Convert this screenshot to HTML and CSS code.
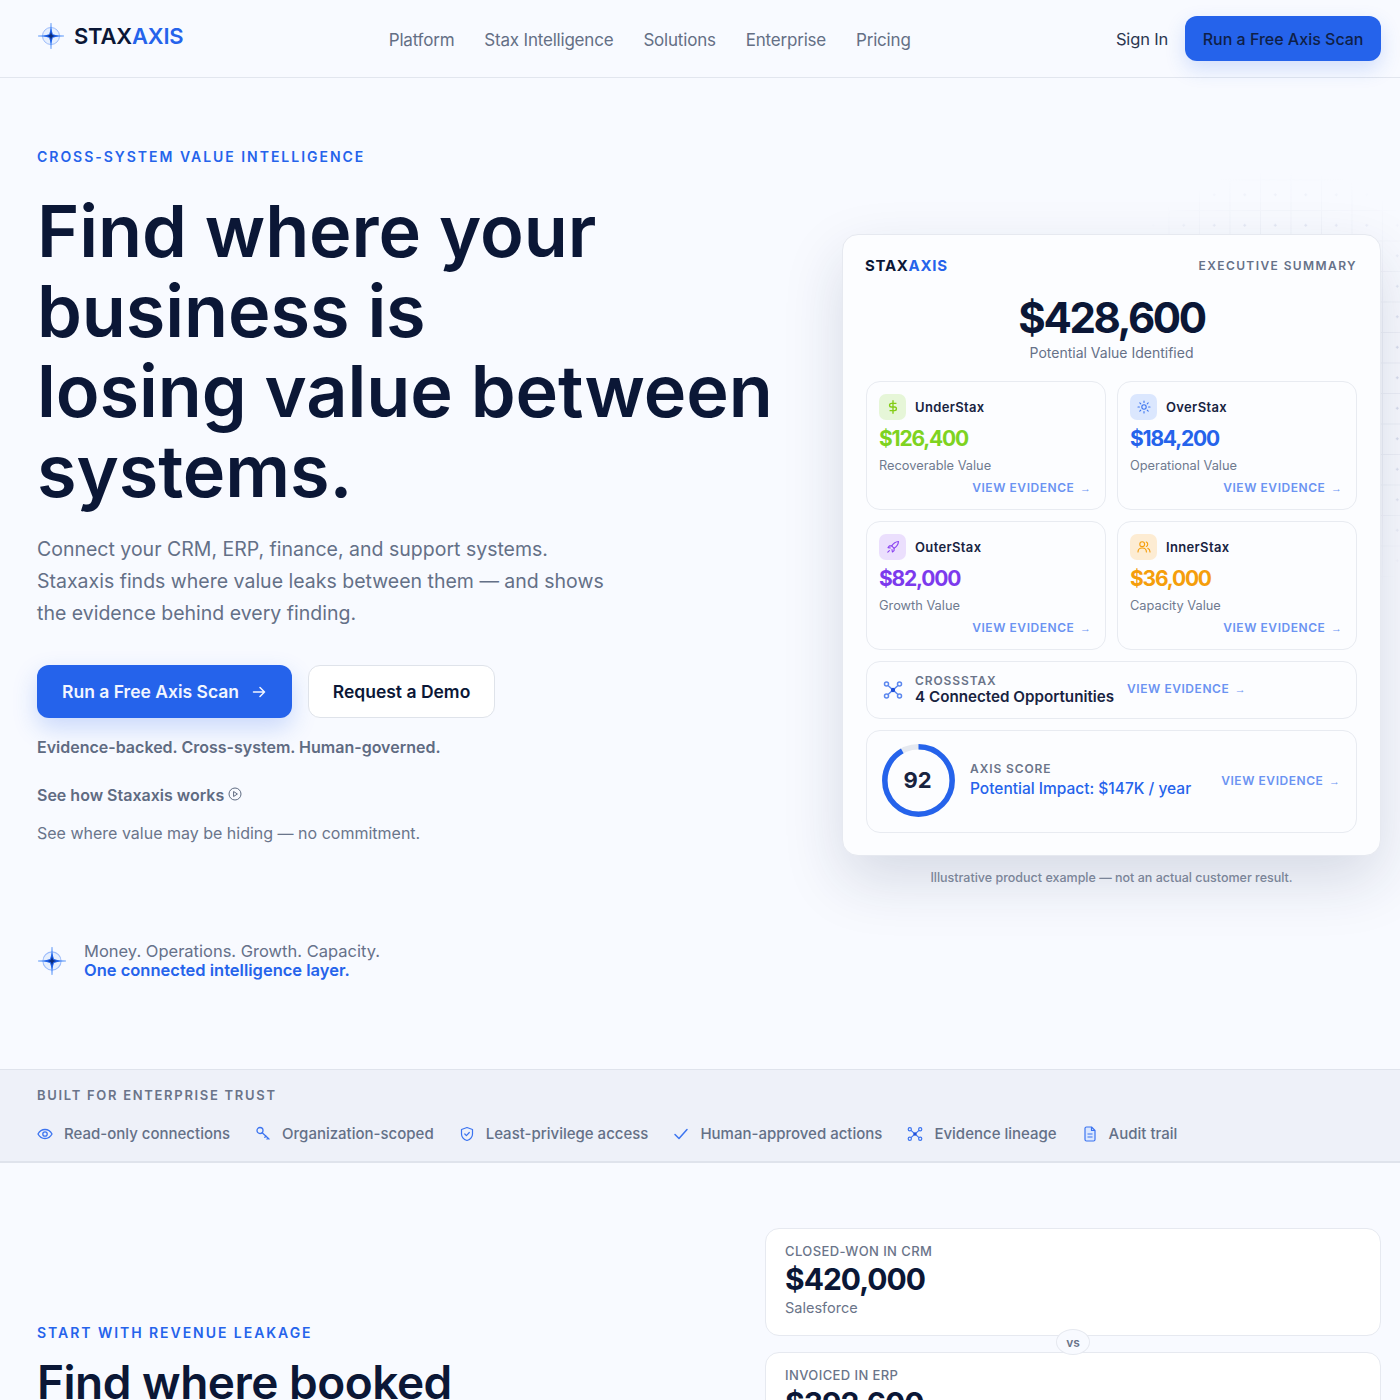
FILE: index.html
```html
<!DOCTYPE html>
<html lang="en">
<head>
  <meta charset="UTF-8">
  <meta name="viewport" content="width=device-width, initial-scale=1.0">
  <title>Staxaxis</title>
  <link rel="stylesheet" href="styles.css">
</head>
<body>
  <svg class="svg-defs" width="0" height="0" aria-hidden="true">
    <defs>
      <symbol id="compass" viewBox="0 0 28 28">
        <circle cx="14" cy="14" r="8.500" fill="#dbe7fe" fill-opacity="0.6" stroke="#9dbcfb" stroke-width="1"/>
        <path d="M14 1 14.700 13.300 27 14 14.700 14.700 14 27 13.300 14.700 1 14 13.300 13.300Z" fill="#3b82f6" stroke="#3b82f6" stroke-width="0.4"/>
        <path d="M14 6 15.800 12.200 22 14 15.800 15.800 14 22 12.200 15.800 6 14 12.200 12.200Z" fill="#1d5fe8"/>
        <path d="M14 10 15 13 18 14 15 15 14 18 13 15 10 14 13 13Z" fill="#0b2a7a"/>
      </symbol>
      <symbol id="network" viewBox="0 0 20 20">
        <g fill="none" stroke="currentColor" stroke-width="1.500">
          <circle cx="3.500" cy="4" r="2"/><circle cx="16.500" cy="4" r="2"/>
          <circle cx="3.500" cy="16" r="2"/><circle cx="16.500" cy="16" r="2"/>
          <path d="M5 5.500 15 14.500M15 5.500 5 14.500"/>
        </g>
        <circle cx="10" cy="10" r="2.200" fill="#1d4ed8"/>
      </symbol>
    </defs>
  </svg>

  <header class="site-header">
    <a class="logo" href="#">
      <svg class="logo-mark" width="28" height="28"><use href="#compass"/></svg>
      <span class="logo-text">STAX<span class="blue">AXIS</span></span>
    </a>
    <nav class="main-nav">
      <a href="#">Platform</a>
      <a href="#">Stax Intelligence</a>
      <a href="#">Solutions</a>
      <a href="#">Enterprise</a>
      <a href="#">Pricing</a>
    </nav>
    <div class="header-actions">
      <a class="sign-in" href="#">Sign In</a>
      <a class="header-cta" href="#">Run a Free Axis Scan</a>
    </div>
  </header>

  <section class="hero">
    <div class="hero-copy">
      <p class="eyebrow">CROSS-SYSTEM VALUE INTELLIGENCE</p>
      <h1>Find where your business is<br>losing value between systems.</h1>
      <p class="lead">Connect your CRM, ERP, finance, and support systems.<br>Staxaxis finds where value leaks between them — and shows<br>the evidence behind every finding.</p>
      <div class="hero-buttons">
        <a class="btn btn-primary" href="#">Run a Free Axis Scan
          <svg width="16" height="16" viewBox="0 0 16 16" fill="none" stroke="currentColor" stroke-width="1.500" stroke-linecap="round" stroke-linejoin="round"><path d="M2.500 8h11M9 3.500 13.500 8 9 12.500"/></svg>
        </a>
        <a class="btn btn-secondary" href="#">Request a Demo</a>
      </div>
      <p class="backed">Evidence-backed. Cross-system. Human-governed.</p>
      <a class="how-link" href="#">See how Staxaxis works
        <svg width="14" height="14" viewBox="0 0 14 14" fill="none" stroke="currentColor" stroke-width="1"><circle cx="7" cy="7" r="6"/><path d="M5.600 4.500 9.400 7 5.600 9.500Z"/></svg>
      </a>
      <p class="no-commit">See where value may be hiding — no commitment.</p>
      <div class="layer-note">
        <svg width="30" height="30"><use href="#compass"/></svg>
        <p>Money. Operations. Growth. Capacity.<br><strong>One connected intelligence layer.</strong></p>
      </div>
    </div>

    <div class="hero-visual">
      <div class="grid-bg"></div>
      <div class="summary-card">
        <div class="summary-head">
          <span class="summary-logo">STAX<span class="blue">AXIS</span></span>
          <span class="summary-tag">EXECUTIVE SUMMARY</span>
        </div>
        <div class="summary-total">$428,600</div>
        <div class="summary-sub">Potential Value Identified</div>

        <div class="stax-grid">
          <div class="stax-card">
            <div class="stax-title">
              <span class="stax-icon icon-green"><svg width="16" height="16" viewBox="0 0 14 14" fill="none" stroke="currentColor" stroke-width="1.200"><path d="M7 1v12M10 3.800H5.600a1.600 1.600 0 0 0 0 3.200h2.800a1.600 1.600 0 0 1 0 3.200H4"/></svg></span>
              UnderStax
            </div>
            <div class="stax-value text-green">$126,400</div>
            <div class="stax-label">Recoverable Value</div>
            <a class="evidence stax-evidence" href="#">VIEW EVIDENCE <span class="evidence-arrow">→</span></a>
          </div>
          <div class="stax-card">
            <div class="stax-title">
              <span class="stax-icon icon-blue"><svg width="14" height="14" viewBox="0 0 14 14" fill="none" stroke="currentColor" stroke-width="1.100" stroke-linecap="round"><circle cx="7" cy="7" r="2.200"/><path d="M7 1v1.400M7 11.600V13M1 7h1.400M11.600 7H13M2.800 2.800l1 1M10.200 10.200l1 1M2.800 11.200l1-1M10.200 3.800l1-1"/></svg></span>
              OverStax
            </div>
            <div class="stax-value text-blue">$184,200</div>
            <div class="stax-label">Operational Value</div>
            <a class="evidence stax-evidence" href="#">VIEW EVIDENCE <span class="evidence-arrow">→</span></a>
          </div>
          <div class="stax-card">
            <div class="stax-title">
              <span class="stax-icon icon-purple"><svg width="14" height="14" viewBox="0 0 14 14" fill="none" stroke="currentColor" stroke-width="1.100" stroke-linecap="round" stroke-linejoin="round"><path d="M12.500 1.500c-3 .2-5 1.600-6.800 4.400l2.400 2.400c2.800-1.800 4.200-3.800 4.400-6.800Z"/><path d="M5.700 5.900H3.400L2 7.600l2.400.4M8.100 8.300v2.300L6.400 12 6 9.600M3.400 10.600 1.800 12.200"/></svg></span>
              OuterStax
            </div>
            <div class="stax-value text-purple">$82,000</div>
            <div class="stax-label">Growth Value</div>
            <a class="evidence stax-evidence" href="#">VIEW EVIDENCE <span class="evidence-arrow">→</span></a>
          </div>
          <div class="stax-card">
            <div class="stax-title">
              <span class="stax-icon icon-orange"><svg width="14" height="14" viewBox="0 0 14 14" fill="none" stroke="currentColor" stroke-width="1.100" stroke-linecap="round"><circle cx="5.200" cy="4.200" r="2.400"/><path d="M1 12c0-2.600 1.800-4 4.200-4s4.200 1.400 4.200 4M9.300 2a2.400 2.400 0 0 1 0 4.400M10.800 8.300c1.400.6 2.200 1.900 2.200 3.700"/></svg></span>
              InnerStax
            </div>
            <div class="stax-value text-orange">$36,000</div>
            <div class="stax-label">Capacity Value</div>
            <a class="evidence stax-evidence" href="#">VIEW EVIDENCE <span class="evidence-arrow">→</span></a>
          </div>
        </div>

        <div class="cross-row">
          <svg class="cross-icon" width="20" height="20"><use href="#network"/></svg>
          <div class="cross-text">
            <div class="mini-label">CROSSSTAX</div>
            <div class="cross-title">4 Connected Opportunities</div>
          </div>
          <a class="evidence cross-evidence" href="#">VIEW EVIDENCE <span class="evidence-arrow">→</span></a>
        </div>

        <div class="score-row">
          <div class="score-ring">
            <svg width="73" height="73" viewBox="0 0 73 73" fill="none" stroke-width="5.500">
              <circle cx="36.500" cy="36.500" r="33.700" stroke="#e5e9f0"/>
              <circle class="score-arc" cx="36.500" cy="36.500" r="33.700" stroke="#2563eb" pathLength="100" stroke-dasharray="92 100"/>
            </svg>
            <span class="score-num">92</span>
          </div>
          <div class="score-text">
            <div class="mini-label">AXIS SCORE</div>
            <div class="score-impact">Potential Impact: $147K / year</div>
          </div>
          <a class="evidence" href="#">VIEW EVIDENCE <span class="evidence-arrow">→</span></a>
        </div>
      </div>
      <p class="card-caption">Illustrative product example — not an actual customer result.</p>
    </div>
  </section>

  <section class="trust-band">
    <p class="trust-title">BUILT FOR ENTERPRISE TRUST</p>
    <ul class="trust-list">
      <li><svg width="16" height="16" viewBox="0 0 16 16" fill="none" stroke="currentColor" stroke-width="1.300"><path d="M1 8c1.600-3 4-4.500 7-4.500s5.400 1.500 7 4.500c-1.600 3-4 4.500-7 4.500S2.600 11 1 8Z"/><circle cx="8" cy="8" r="2.200"/></svg>Read-only connections</li>
      <li><svg width="16" height="16" viewBox="0 0 16 16" fill="none" stroke="currentColor" stroke-width="1.300" stroke-linecap="round"><circle cx="5" cy="4.500" r="3"/><path d="M7.200 6.700 14 13M11 10l-1.200 1.200M13 12l-1 1"/></svg>Organization-scoped</li>
      <li><svg width="16" height="16" viewBox="0 0 16 16" fill="none" stroke="currentColor" stroke-width="1.200" stroke-linecap="round" stroke-linejoin="round"><path d="M8 1.500 13.500 3.500V8c0 3.200-2.200 5.400-5.500 6.500C4.700 13.400 2.500 11.200 2.500 8V3.500Z"/><path d="M5.800 8 7.400 9.600 10.300 6.500"/></svg>Least-privilege access</li>
      <li><svg width="16" height="16" viewBox="0 0 16 16" fill="none" stroke="currentColor" stroke-width="1.500" stroke-linecap="round" stroke-linejoin="round"><path d="M2 8.500 6 12.500 14 3.500"/></svg>Human-approved actions</li>
      <li><svg width="16" height="16"><use href="#network"/></svg>Evidence lineage</li>
      <li><svg width="16" height="16" viewBox="0 0 16 16" fill="#dbe7fe" stroke="currentColor" stroke-width="1.200" stroke-linejoin="round"><path d="M3 2.500A1.500 1.500 0 0 1 4.500 1H9.500L13 4.500V13.500A1.500 1.500 0 0 1 11.500 15H4.500A1.500 1.500 0 0 1 3 13.500Z"/><path d="M9.500 1V4.500H13M5.500 8H10.500M5.500 11H10.500" fill="none"/></svg>Audit trail</li>
    </ul>
  </section>

  <section class="leakage">
    <div class="leakage-copy">
      <p class="eyebrow">START WITH REVENUE LEAKAGE</p>
      <h2>Find where booked</h2>
    </div>
    <div class="compare">
      <div class="compare-card">
        <div class="compare-label">CLOSED-WON IN CRM</div>
        <div class="compare-value">$420,000</div>
        <div class="compare-source">Salesforce</div>
      </div>
      <span class="vs">vs</span>
      <div class="compare-card">
        <div class="compare-label">INVOICED IN ERP</div>
        <div class="compare-value">$392,600</div>
      </div>
    </div>
  </section>
</body>
</html>
```

FILE: styles.css
```css
* {
  box-sizing: border-box;
}
html, body {
  height: 1400px;
  overflow: hidden;
}
body {
  margin: 0;
  background-color: #f8faff;
  color: #0b1736;
  font-family: Inter, "Liberation Sans", sans-serif;
}
a {
  color: inherit;
  text-decoration: none;
}
p {
  margin: 0;
}
.svg-defs {
  position: absolute;
}
.blue {
  color: #2563eb;
}

/* header */
.site-header {
  height: 78px;
  padding: 0 19px 0 37px;
  display: flex;
  justify-content: space-between;
  align-items: center;
  border-bottom: 1px solid #e2e6ee;
}
.logo {
  display: flex;
  align-items: center;
  gap: 9px;
  margin-top: -6px;
}
.logo-text {
  font-size: 22px;
  font-weight: 600;
  letter-spacing: -0.2px;
}
.main-nav {
  display: flex;
  gap: 30px;
  padding-top: 2px;
  font-size: 17px;
  color: #646f85;
  letter-spacing: -0.2px;
}
.header-actions {
  display: flex;
  justify-content: flex-end;
  align-items: center;
  gap: 17px;
}
.sign-in {
  font-size: 16.500px;
  letter-spacing: -0.15px;
  color: #2b3650;
}
.header-cta {
  height: 45px;
  padding: 0 17.500px;
  display: flex;
  align-items: center;
  background-color: #2563eb;
  border-radius: 12px;
  color: #0f1f47;
  font-size: 16px;
  font-weight: 500;
  box-shadow: 0 8px 20px rgba(37,99,235,0.18);
}

/* hero */
.hero {
  height: 991px;
  padding: 0 19px 0 37px;
  display: flex;
  justify-content: space-between;
}
.hero-copy {
  padding-top: 70px;
  width: 760px;
}
.eyebrow {
  font-size: 14px;
  font-weight: 600;
  line-height: 17px;
  letter-spacing: 1.970px;
  color: #2563eb;
}
h1 {
  margin: 26px 0 0;
  font-size: 72px;
  font-weight: 600;
  line-height: 80px;
  letter-spacing: -0.1px;
  color: #0b1736;
}
.lead {
  margin-top: 22px;
  font-size: 19.500px;
  line-height: 32px;
  color: #647087;
}
.hero-buttons {
  margin-top: 36px;
  display: flex;
  gap: 16px;
}
.btn {
  height: 53px;
  display: flex;
  align-items: center;
  border-radius: 12px;
  font-size: 17.500px;
  font-weight: 600;
}
.btn-primary {
  width: 255px;
  padding-left: 25px;
  gap: 12px;
  background-color: #2563eb;
  color: #f2f6ff;
  box-shadow: 0 10px 24px rgba(37,99,235,0.22);
}
.btn-secondary {
  width: 187px;
  justify-content: center;
  background-color: #fff;
  border: 1px solid #dfe3ea;
}
.backed {
  margin-top: 19px;
  font-size: 16px;
  line-height: 20px;
  font-weight: 600;
  color: #5f6b82;
}
.how-link {
  margin-top: 28px;
  display: flex;
  align-items: center;
  gap: 4px;
  font-size: 16px;
  line-height: 20px;
  font-weight: 600;
  color: #5f6b82;
}
.how-link svg {
  margin-top: -3px;
}
.no-commit {
  margin-top: 18px;
  font-size: 16px;
  line-height: 20px;
  color: #6a758b;
}
.layer-note {
  margin-top: 99px;
  display: flex;
  align-items: center;
  gap: 17px;
}
.layer-note p {
  font-size: 16.500px;
  line-height: 19px;
  color: #66718a;
}
.layer-note strong {
  font-weight: 600;
  color: #2563eb;
}

/* summary card */
.hero-visual {
  position: relative;
  width: 539px;
  padding-top: 156px;
}
.grid-bg {
  position: absolute;
  top: 95px;
  left: 240px;
  right: -19px;
  height: 440px;
  background-image:
    radial-gradient(circle, #d5dcec 1px, transparent 1.400px),
    linear-gradient(#eceff7 1px, transparent 1px),
    linear-gradient(90deg, #eceff7 1px, transparent 1px);
  background-size: 30.500px 30.500px;
  background-position: 25.500px 6.500px;
  -webkit-mask-image: radial-gradient(ellipse 203px 224px at 200px 220px, #000 60%, transparent 100%);
  mask-image: radial-gradient(ellipse 203px 224px at 200px 220px, #000 60%, transparent 100%);
}
.summary-card {
  position: relative;
  height: 622px;
  padding: 22px 23px 0;
  background-color: #fcfdff;
  border: 1px solid #e6e9f0;
  border-radius: 16px;
  box-shadow: 0 24px 60px rgba(25,40,80,0.15);
}
.summary-head {
  display: flex;
  justify-content: space-between;
  align-items: center;
  height: 17px;
}
.summary-logo {
  margin-left: -1px;
  font-size: 15px;
  font-weight: 700;
  letter-spacing: 0.7px;
  color: #0b1736;
}
.summary-tag {
  font-size: 12px;
  font-weight: 600;
  letter-spacing: 1.400px;
  color: #667188;
}
.summary-total {
  margin-top: 19px;
  text-align: center;
  font-size: 42px;
  font-weight: 700;
  line-height: 50px;
  letter-spacing: -2.400px;
}
.summary-sub {
  text-align: center;
  font-size: 14px;
  line-height: 20px;
  color: #667188;
}
.stax-grid {
  margin-top: 18px;
  display: grid;
  grid-template-columns: 240px 240px;
  grid-auto-rows: 129px;
  gap: 11px;
}
.stax-card {
  padding: 12px 12px 0;
  display: flex;
  flex-direction: column;
  border: 1px solid #e8ebf1;
  border-radius: 14px;
}
.stax-title {
  display: flex;
  align-items: center;
  gap: 9px;
  font-size: 13px;
  font-weight: 600;
  letter-spacing: 0.35px;
  color: #18233f;
}
.stax-icon {
  width: 27px;
  height: 26px;
  display: flex;
  align-items: center;
  justify-content: center;
  border-radius: 7px;
}
.icon-green {
  background-color: #e6f6d8;
  color: #84cc16;
}
.icon-blue {
  background-color: #dbe7fe;
  color: #3b74f0;
}
.icon-purple {
  background-color: #ebdffd;
  color: #8b45f0;
}
.icon-orange {
  background-color: #fdecd3;
  color: #f59e0b;
}
.stax-value {
  margin-top: 5px;
  font-size: 21px;
  font-weight: 700;
  line-height: 27px;
  letter-spacing: -1.2px;
}
.text-green {
  color: #7ed321;
}
.text-blue {
  color: #2563eb;
}
.text-purple {
  color: #7c3aed;
}
.text-orange {
  color: #f59e0b;
}
.stax-label {
  margin-top: 5px;
  font-size: 12.800px;
  line-height: 17px;
  color: #6f7a8f;
}
.evidence {
  flex-shrink: 0;
  font-size: 12px;
  font-weight: 600;
  line-height: 16px;
  letter-spacing: 0.55px;
  color: #6b93f2;
}
.evidence-arrow {
  margin-left: 2px;
  font-family: "Liberation Sans", sans-serif;
  font-size: 11px;
  font-weight: 400;
  letter-spacing: 0;
}
.stax-evidence {
  margin-top: 6px;
  align-self: flex-end;
  margin-right: 2px;
}
.cross-row {
  margin-top: 11px;
  height: 58px;
  padding: 0 16px;
  display: flex;
  align-items: center;
  gap: 13px;
  border: 1px solid #e8ebf1;
  border-radius: 14px;
}
.cross-icon {
  color: #5b87ee;
}
.cross-text {
  margin-left: -1px;
}
.cross-evidence {
  margin-bottom: 2px;
}
.mini-label {
  font-size: 12px;
  font-weight: 600;
  line-height: 14px;
  letter-spacing: 0.9px;
  color: #6a7489;
}
.cross-title {
  font-size: 15.200px;
  font-weight: 600;
  line-height: 18px;
  color: #18233f;
}
.score-row {
  margin-top: 11px;
  height: 103px;
  padding: 0 16px 2px 15px;
  display: flex;
  align-items: center;
  border: 1px solid #e8ebf1;
  border-radius: 14px;
}
.score-ring {
  position: relative;
  width: 73px;
  height: 73px;
  display: flex;
  align-items: center;
  justify-content: center;
}
.score-ring svg {
  position: absolute;
  inset: 0;
}
.score-arc {
  transform: rotate(-90deg);
  transform-origin: center;
}
.score-num {
  position: relative;
  margin: -2px 2px 0 0;
  font-size: 22px;
  font-weight: 700;
  color: #18233f;
}
.score-text {
  flex: 1;
  margin-left: 15px;
}
.score-impact {
  margin-top: 3px;
  font-size: 15.500px;
  font-weight: 500;
  line-height: 20px;
  color: #2563eb;
}
.card-caption {
  position: relative;
  margin-top: 14px;
  text-align: center;
  font-size: 12.500px;
  font-weight: 500;
  line-height: 16px;
  color: #7a8498;
}

/* trust band */
.trust-band {
  height: 94px;
  padding: 17px 37px 0;
  background-color: #eef1f9;
  border-top: 1px solid #dfe3ec;
  border-bottom: 2px solid #dfe3ec;
}
.trust-title {
  font-size: 13px;
  font-weight: 600;
  line-height: 16px;
  letter-spacing: 1.700px;
  color: #6a7489;
}
.trust-list {
  margin: 22px 0 0;
  padding: 0;
  list-style: none;
  display: flex;
  gap: 25px;
}
.trust-list li {
  display: flex;
  align-items: center;
  gap: 11px;
  font-size: 15px;
  font-weight: 500;
  line-height: 18px;
  color: #647087;
}
.trust-list svg {
  color: #3b74f0;
}

/* revenue leakage */
.leakage {
  padding: 65px 19px 0 37px;
  display: flex;
  justify-content: space-between;
}
.leakage-copy {
  padding-top: 96px;
}
.leakage .eyebrow {
  letter-spacing: 1.950px;
}
h2 {
  margin: 13px 0 0;
  font-size: 46px;
  font-weight: 600;
  line-height: 56px;
  letter-spacing: -0.5px;
}
.compare {
  position: relative;
  width: 616px;
  display: flex;
  flex-direction: column;
  gap: 16px;
}
.compare-card {
  height: 108px;
  padding: 14px 19px 0;
  background-color: #fff;
  border: 1px solid #e6e9f0;
  border-radius: 14px;
}
.compare-label {
  font-size: 13px;
  font-weight: 500;
  line-height: 17px;
  letter-spacing: 0.4px;
  color: #6a7489;
}
.compare-value {
  font-size: 30px;
  font-weight: 700;
  line-height: 38px;
  letter-spacing: -1px;
}
.compare-source {
  margin-top: 1px;
  font-size: 14.500px;
  line-height: 18px;
  color: #6a7489;
}
.vs {
  position: absolute;
  top: 101px;
  left: 291px;
  width: 34px;
  height: 26px;
  display: flex;
  align-items: center;
  justify-content: center;
  background-color: #f8faff;
  border: 1px solid #e6e9f0;
  border-radius: 50%;
  font-size: 12px;
  font-weight: 600;
  color: #6a7489;
}
```
